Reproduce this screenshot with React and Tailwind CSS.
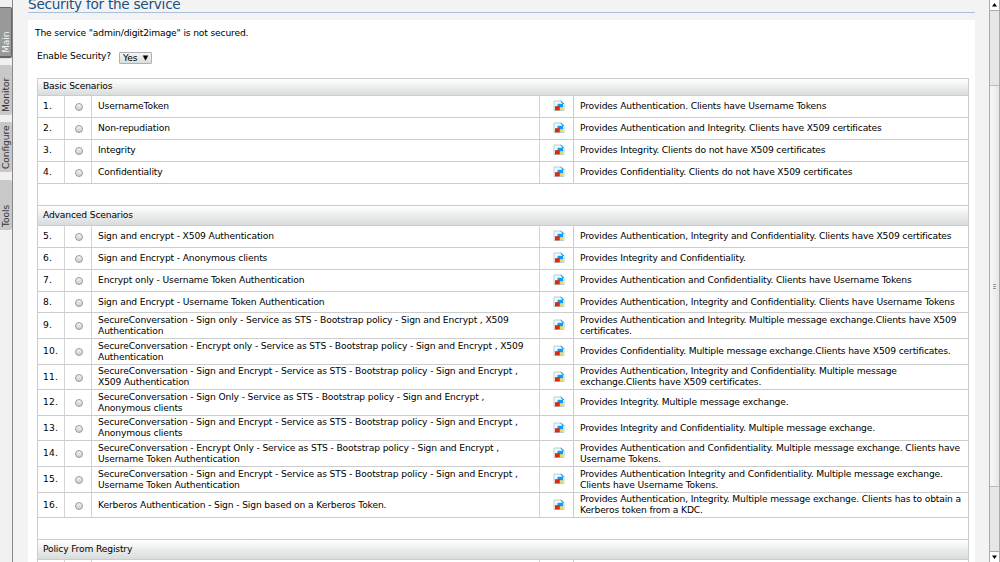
const basic = [
  [22, 'UsernameToken', 'Provides Authentication. Clients have Username Tokens'],
  [22, 'Non-repudiation', 'Provides Authentication and Integrity. Clients have X509 certificates'],
  [22, 'Integrity', 'Provides Integrity. Clients do not have X509 certificates'],
  [22, 'Confidentiality', 'Provides Confidentiality. Clients do not have X509 certificates'],
];

const advanced = [
  [22, 'Sign and encrypt - X509 Authentication', 'Provides Authentication, Integrity and Confidentiality. Clients have X509 certificates'],
  [22, 'Sign and Encrypt - Anonymous clients', 'Provides Integrity and Confidentiality.'],
  [22, 'Encrypt only - Username Token Authentication', 'Provides Authentication and Confidentiality. Clients have Username Tokens'],
  [21, 'Sign and Encrypt - Username Token Authentication', 'Provides Authentication, Integrity and Confidentiality. Clients have Username Tokens'],
  [26, 'SecureConversation - Sign only - Service as STS - Bootstrap policy - Sign and Encrypt , X509\nAuthentication', 'Provides Authentication and Integrity. Multiple message exchange.Clients have X509\ncertificates.'],
  [26, 'SecureConversation - Encrypt only - Service as STS - Bootstrap policy - Sign and Encrypt , X509\nAuthentication', 'Provides Confidentiality. Multiple message exchange.Clients have X509 certificates.'],
  [25, 'SecureConversation - Sign and Encrypt - Service as STS - Bootstrap policy - Sign and Encrypt ,\nX509 Authentication', 'Provides Authentication, Integrity and Confidentiality. Multiple message\nexchange.Clients have X509 certificates.'],
  [26, 'SecureConversation - Sign Only - Service as STS - Bootstrap policy - Sign and Encrypt ,\nAnonymous clients', 'Provides Integrity. Multiple message exchange.'],
  [25, 'SecureConversation - Sign and Encrypt - Service as STS - Bootstrap policy - Sign and Encrypt ,\nAnonymous clients', 'Provides Integrity and Confidentiality. Multiple message exchange.'],
  [26, 'SecureConversation - Encrypt Only - Service as STS - Bootstrap policy - Sign and Encrypt ,\nUsername Token Authentication', 'Provides Authentication and Confidentiality. Multiple message exchange. Clients have\nUsername Tokens.'],
  [26, 'SecureConversation - Sign and Encrypt - Service as STS - Bootstrap policy - Sign and Encrypt ,\nUsername Token Authentication', 'Provides Authentication Integrity and Confidentiality. Multiple message exchange.\nClients have Username Tokens.'],
  [25, 'Kerberos Authentication - Sign - Sign based on a Kerberos Token.', 'Provides Authentication, Integrity. Multiple message exchange. Clients has to obtain a\nKerberos token from a KDC.'],
];

function PolicyIcon() {
  return (
    <svg width="12" height="12" viewBox="0 0 12 12" className="shrink-0">
      <path d="M1 10.5V1H8L11 4V10.5Z" fill="#f4f9fb" stroke="#a9cbd6" strokeWidth="0.9" />
      <path d="M7.2 0.8H8.2L11.2 3.6V4H9.5Z" fill="#2aa5ee" />
      <path d="M4.5 3.8H10V7.5H4.5Z" fill="#0a9cfb" />
      <path d="M6.5 7.5H9.8V10H6.5Z" fill="#f6d04c" />
      <path d="M2 6.2H6.8V10.4H2Z" fill="#d92b0b" />
    </svg>
  );
}

function Radio() {
  return <span className="mt-px ml-[2px] block size-2 rounded-full border border-[#999999] bg-linear-to-b from-[#f4f4f4] to-[#cccccc]" />;
}

function Heading({ children, className }) {
  return (
    <div className={`flex items-center border-b border-[#cccccc] bg-linear-to-b from-white to-[#d8dcdc] pl-[5px] ${className}`}>
      <span>{children}</span>
    </div>
  );
}

function Row({ height, number, name, description }) {
  return (
    <div className="grid grid-cols-[27px_27px_448px_34px_1fr] border-b border-[#cccccc]" style={{ height }}>
      <div className="flex items-center border-r border-[#d4d4d4] pb-[2px] pl-[5px] tracking-[0.12px]">{number}</div>
      <div className="flex items-center justify-center border-r border-[#d4d4d4]">{name && <Radio />}</div>
      <div className="flex items-center border-r border-[#d4d4d4] pb-[2px] pl-[6px] tracking-[-0.137px] whitespace-pre">{name}</div>
      <div className="flex items-center justify-center border-r border-[#cccccc] pb-px pl-[4px]">{name && <PolicyIcon />}</div>
      <div className="flex items-center pb-[2px] pl-[6px] whitespace-pre">{description}</div>
    </div>
  );
}

const tabs = [
  ['Main', 'mt-[7px] h-[50px] bg-[#999999] text-[#f4f4f4] border border-[#666666] border-r-0 shadow-[0_-1px_1px_#555]'],
  ['Monitor', 'mt-2 h-[50px] bg-[#c8c8c8] text-[#333333]'],
  ['Configure', 'mt-[7px] h-[50px] bg-[#c8c8c8] text-[#333333]'],
  ['Tools', 'mt-2 h-[50px] bg-[#c8c8c8] text-[#333333]'],
];

export default function App() {
  return (
    <div className="flex h-[562px] w-[1000px] overflow-hidden bg-[#f3f3f3] font-['DejaVu_Sans',sans-serif] text-[9.17px] leading-[11px] tracking-[-0.157px] text-black">
      <nav className="flex w-[13px] shrink-0 flex-col border-r border-[#888888] bg-[#f0f0f0]">
        {tabs.map(([label, style]) => (
          <div key={label} className={`flex w-3 shrink-0 rotate-180 items-center rounded-l-xs pt-[3px] text-[9.17px] leading-[11px] tracking-[-0.1px] [writing-mode:vertical-rl] ${style}`}>
            <span className="w-full">{label}</span>
          </div>
        ))}
      </nav>
      <main className="ml-[15px] flex h-[562px] w-[947px] shrink-0 flex-col overflow-hidden">
        <h1 className="h-[13px] shrink-0 border-b border-[#a9bfdc] text-[13.6px] leading-[8px] tracking-[-0.25px] text-[#1b517e]">Security for the service</h1>
        <section className="mt-[7px] h-[542px] shrink-0 overflow-hidden bg-white">
          <p className="pt-[7px] pl-[7px]">The service "admin/digit2image" is not secured.</p>
          <div className="flex h-[40px] items-start pt-[12px] pl-[9px]">
            <span>Enable Security?</span>
            <button className="mt-[2px] ml-[8px] flex h-3 w-[33px] items-center justify-between rounded-[1px] border border-[#b0b0b0] bg-linear-to-b from-[#f5f5f5] to-[#dddddd] px-[3px] leading-[10px]">
              <span>Yes</span>
              <span className="text-[7px]">▼</span>
            </button>
          </div>
          <div className="ml-[9px] w-[932px] border border-[#cccccc]">
            <Heading className="h-[17px] pb-[3px]">Basic Scenarios</Heading>
            {basic.map(([h, name, text], i) => (
              <Row key={i} height={h} number={`${i + 1}.`} name={name} description={text} />
            ))}
            <div className="h-[22px] border-b border-[#cccccc]" />
            <Heading className="h-[20px] pb-[2px]">Advanced Scenarios</Heading>
            {advanced.map(([h, name, text], i) => (
              <Row key={i} height={h} number={`${i + 5}.`} name={name} description={text} />
            ))}
            <div className="h-[22px] border-b border-[#cccccc]" />
            <Heading className="h-[20px] pb-[2px]">Policy From Registry</Heading>
            <Row height={22} />
          </div>
        </section>
      </main>
      <aside className="ml-[14px] flex w-[11px] shrink-0 flex-col border-x border-[#aaaaaa] bg-[#e7e6e5]">
        <div className="flex h-[11px] shrink-0 items-center justify-center border-b border-[#aaaaaa] bg-white">
          <svg width="5" height="4" viewBox="0 0 5 4"><path d="M2.5 0L5 3.5H0Z" fill="#000" /></svg>
        </div>
        <div className="mt-[74px] flex h-[402px] shrink-0 flex-col items-center justify-center gap-px border-y border-[#bbbbbb] bg-linear-to-r from-[#f8f8f8] to-[#e8e6e4]">
          <span className="h-px w-[3px] bg-[#999999]" />
          <span className="h-px w-[3px] bg-[#999999]" />
          <span className="h-px w-[3px] bg-[#999999]" />
        </div>
        <div className="mt-auto flex h-[11px] shrink-0 items-center justify-center border-t border-[#aaaaaa] bg-white">
          <svg width="5" height="4" viewBox="0 0 5 4"><path d="M0 0.5H5L2.5 4Z" fill="#000" /></svg>
        </div>
      </aside>
    </div>
  );
}
